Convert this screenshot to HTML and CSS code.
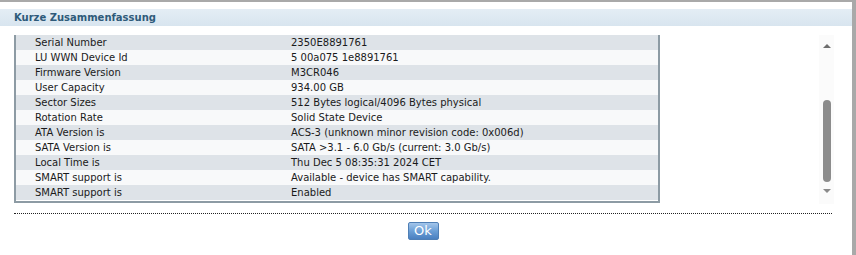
FILE: index.html
```html
<!DOCTYPE html>
<html lang="de">
<head>
    <meta charset="UTF-8">
    <title>Kurze Zusammenfassung</title>
    <link rel="stylesheet" href="styles.css">
</head>
<body>
    <div class="dialog">
        <div class="title">Kurze Zusammenfassung</div>

        <div class="content">
            <div class="table-wrap">
                <table class="info">
                    <tr><td>Serial Number</td><td>2350E8891761</td></tr>
                    <tr><td>LU WWN Device Id</td><td>5 00a075 1e8891761</td></tr>
                    <tr><td>Firmware Version</td><td>M3CR046</td></tr>
                    <tr><td>User Capacity</td><td>934.00 GB</td></tr>
                    <tr><td>Sector Sizes</td><td>512 Bytes logical/4096 Bytes physical</td></tr>
                    <tr><td>Rotation Rate</td><td>Solid State Device</td></tr>
                    <tr><td>ATA Version is</td><td>ACS-3 (unknown minor revision code: 0x006d)</td></tr>
                    <tr><td>SATA Version is</td><td>SATA &gt;3.1 - 6.0 Gb/s (current: 3.0 Gb/s)</td></tr>
                    <tr><td>Local Time is</td><td>Thu Dec 5 08:35:31 2024 CET</td></tr>
                    <tr><td>SMART support is</td><td>Available - device has SMART capability.</td></tr>
                    <tr><td>SMART support is</td><td>Enabled</td></tr>
                </table>
            </div>

            <div class="scrollbar">
                <div class="arrow up"></div>
                <div class="track">
                    <div class="thumb"></div>
                </div>
                <div class="arrow down"></div>
            </div>
        </div>

        <div class="footer">
            <button class="ok">Ok</button>
        </div>
    </div>
</body>
</html>
```

FILE: styles.css
```css
body {
    margin: 0;
    background: #ffffff;
    font-family: "DejaVu Sans", Verdana, sans-serif;
}

.dialog {
    width: 852px;
    height: 250px;
    border-top: 2px solid #a9a9a9;
    border-right: 4px solid #a9a9a9;
    border-bottom: 3px solid #a9a9a9;
    padding-top: 7px;
    box-sizing: content-box;
}

.title {
    height: 17px;
    line-height: 17px;
    padding-left: 14px;
    background: linear-gradient(to bottom, #e4edf5, #d8e5ef);
    color: #2e5a7a;
    font-size: 10px;
    font-weight: bold;
}

.content {
    display: flex;
    margin-top: 9px;
    height: 169px;
}

.table-wrap {
    margin-left: 14px;
    width: 642px;
    border-left: 2px solid #8d9ba4;
    border-right: 2px solid #8d9ba4;
    border-bottom: 2px solid #8d9ba4;
    height: 166px;
}

.info {
    width: 100%;
    border-collapse: collapse;
    font-size: 10px;
    color: #1a1a1a;
}

.info td {
    height: 15px;
    padding: 0;
    line-height: 15px;
    white-space: nowrap;
}

.info td:first-child {
    width: 256px;
    padding-left: 19px;
}

.info tr:nth-child(odd) {
    background: #dee3e8;
}

.info tr:nth-child(even) {
    background: #f8f9fa;
}

.scrollbar {
    margin-left: 159px;
    width: 15px;
    display: flex;
    flex-direction: column;
    align-items: center;
    background: #fbfbfb;
}

.arrow {
    width: 0;
    height: 0;
    border-left: 4px solid transparent;
    border-right: 4px solid transparent;
}

.arrow.up {
    margin-top: 9px;
    border-bottom: 4px solid #6e6e6e;
}

.arrow.down {
    margin-top: 5px;
    border-top: 4px solid #8a8a8a;
}

.track {
    height: 136px;
    width: 15px;
    display: flex;
    flex-direction: column;
    justify-content: flex-end;
    align-items: center;
}

.thumb {
    width: 8px;
    height: 82px;
    border-radius: 4px;
    background: #8c8c8c;
    margin-bottom: 2px;
}

.footer {
    margin-left: 14px;
    width: 818px;
    border-top: 1px dotted #222222;
    margin-top: 9px;
    padding-top: 8px;
    display: flex;
    justify-content: center;
}

.ok {
    width: 31px;
    height: 18px;
    padding: 0;
    border: 1px solid #4f7fb5;
    border-radius: 2px;
    background: linear-gradient(to bottom, #a3c5ea 0%, #6b9fd6 50%, #4a80c0 100%);
    color: #ffffff;
    font-family: "DejaVu Sans", Verdana, sans-serif;
    font-size: 13px;
    line-height: 16px;
    cursor: pointer;
}
```
